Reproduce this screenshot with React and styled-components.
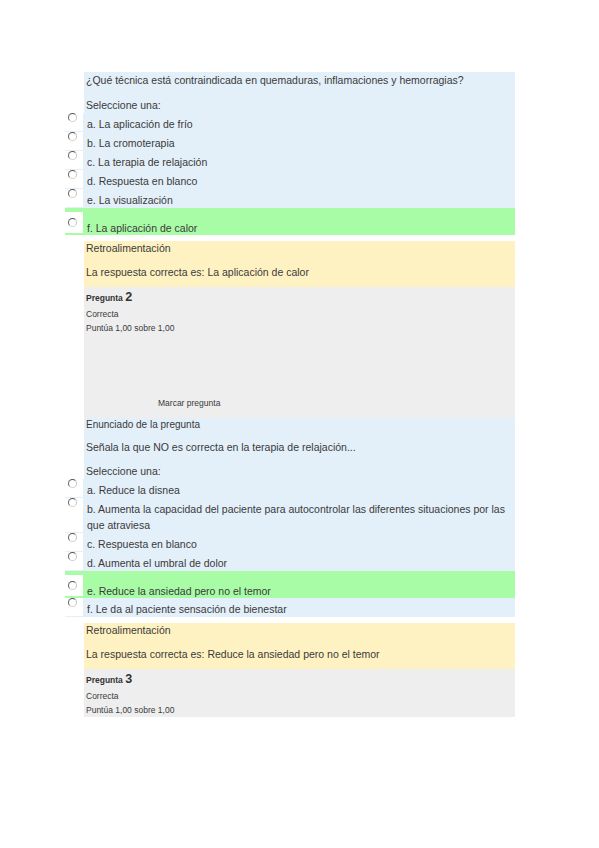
import React from 'react'
import styled, { createGlobalStyle } from 'styled-components'

const Global = createGlobalStyle`
  html, body { margin: 0; padding: 0; background: #fff; }
  body {
    font-family: "Liberation Sans", Arial, sans-serif;
    color: #3a3a3a;
  }
`

const Page = styled.div`
  width: 450px;
  margin: 72px 0 0 65px;
`

const Prompt = styled.div`
  margin-left: 19px;
  background: #e3eff9;
  padding-left: 2px;
`

const Line = styled.div`
  font-size: ${p => p.$fs || 10.5}px;
  line-height: ${p => p.$lh || 16}px;
  margin-top: ${p => p.$mt || 0}px;
  white-space: nowrap;
`

const Answers = styled.div`
  background: #e3eff9;
`

const Option = styled.div`
  display: flex;
  align-items: flex-start;
  background: ${p => (p.$correct ? '#a9fca6' : 'transparent')};
`

const RadioCell = styled.div`
  flex: none;
  width: 18px;
  align-self: stretch;
  background: #fff;
  margin: ${p => (p.$correct ? '4px 0 2px' : '0 0 1px')};
`

const Radio = styled.span`
  display: block;
  box-sizing: border-box;
  width: 9px;
  height: 9px;
  border-radius: 50%;
  border: 1.2px solid;
  border-color: #555 #c4c4c4 #d4d4d4 #666;
  background: #fff;
  margin: ${p => (p.$correct ? '5.5px' : '0')} 0 0 3px;
`

const Label = styled.div`
  flex: 1;
  font-size: 10.5px;
  line-height: ${p => (p.$correct ? 13 : 16)}px;
  padding: ${p => (p.$correct ? '14px 0 0 4px' : '3px 0 0 4px')};
  white-space: nowrap;
`

const Feedback = styled.div`
  margin: 6px 0 0 19px;
  background: #fff2c2;
  padding: 0 0 7px 2px;
`

const Info = styled.div`
  margin-left: 19px;
  background: #eeeeee;
  padding: 1px 0 ${p => p.$pb || 0}px 2px;
`

const QNo = styled.div`
  font-size: 8.5px;
  font-weight: bold;
  line-height: 18px;
  color: #333;

  span {
    font-size: 12.5px;
  }
`

const Small = styled.div`
  font-size: 8.5px;
  line-height: ${p => p.$lh || 15}px;
`

const FlagArea = styled.div`
  height: 61px;
`

const Flag = styled.div`
  font-size: 8.5px;
  line-height: 14px;
  margin-left: 72px;
`

function Choice({ correct, children }) {
  return (
    <Option $correct={correct}>
      <RadioCell $correct={correct}>
        <Radio $correct={correct} />
      </RadioCell>
      <Label $correct={correct}>{children}</Label>
    </Option>
  )
}

function QuestionInfo({ n, flag }) {
  return (
    <Info $pb={flag ? 8 : 0}>
      <QNo>
        Pregunta <span>{n}</span>
      </QNo>
      <Small>Correcta</Small>
      <Small $lh={13}>Puntúa 1,00 sobre 1,00</Small>
      {flag && (
        <>
          <FlagArea />
          <Flag>Marcar pregunta</Flag>
        </>
      )}
    </Info>
  )
}

export default function App() {
  return (
    <Page>
      <Global />

      <Prompt>
        <Line>¿Qué técnica está contraindicada en quemaduras, inflamaciones y hemorragias?</Line>
        <Line $mt={9}>Seleccione una:</Line>
      </Prompt>
      <Answers>
        <Choice>a. La aplicación de frío</Choice>
        <Choice>b. La cromoterapia</Choice>
        <Choice>c. La terapia de relajación</Choice>
        <Choice>d. Respuesta en blanco</Choice>
        <Choice>e. La visualización</Choice>
        <Choice correct>f. La aplicación de calor</Choice>
      </Answers>
      <Feedback>
        <Line $lh={15}>Retroalimentación</Line>
        <Line $mt={8}>La respuesta correcta es: La aplicación de calor</Line>
      </Feedback>

      <QuestionInfo n={2} flag />

      <Prompt>
        <Line $fs={10} $lh={13}>Enunciado de la pregunta</Line>
        <Line $mt={8}>Señala la que NO es correcta en la terapia de relajación...</Line>
        <Line $mt={8}>Seleccione una:</Line>
      </Prompt>
      <Answers>
        <Choice>a. Reduce la disnea</Choice>
        <Choice>
          b. Aumenta la capacidad del paciente para autocontrolar las diferentes situaciones por las
          <br />
          que atraviesa
        </Choice>
        <Choice>c. Respuesta en blanco</Choice>
        <Choice>d. Aumenta el umbral de dolor</Choice>
        <Choice correct>e. Reduce la ansiedad pero no el temor</Choice>
        <Choice>f. Le da al paciente sensación de bienestar</Choice>
      </Answers>
      <Feedback>
        <Line $lh={15}>Retroalimentación</Line>
        <Line $mt={8}>La respuesta correcta es: Reduce la ansiedad pero no el temor</Line>
      </Feedback>

      <QuestionInfo n={3} />
    </Page>
  )
}
